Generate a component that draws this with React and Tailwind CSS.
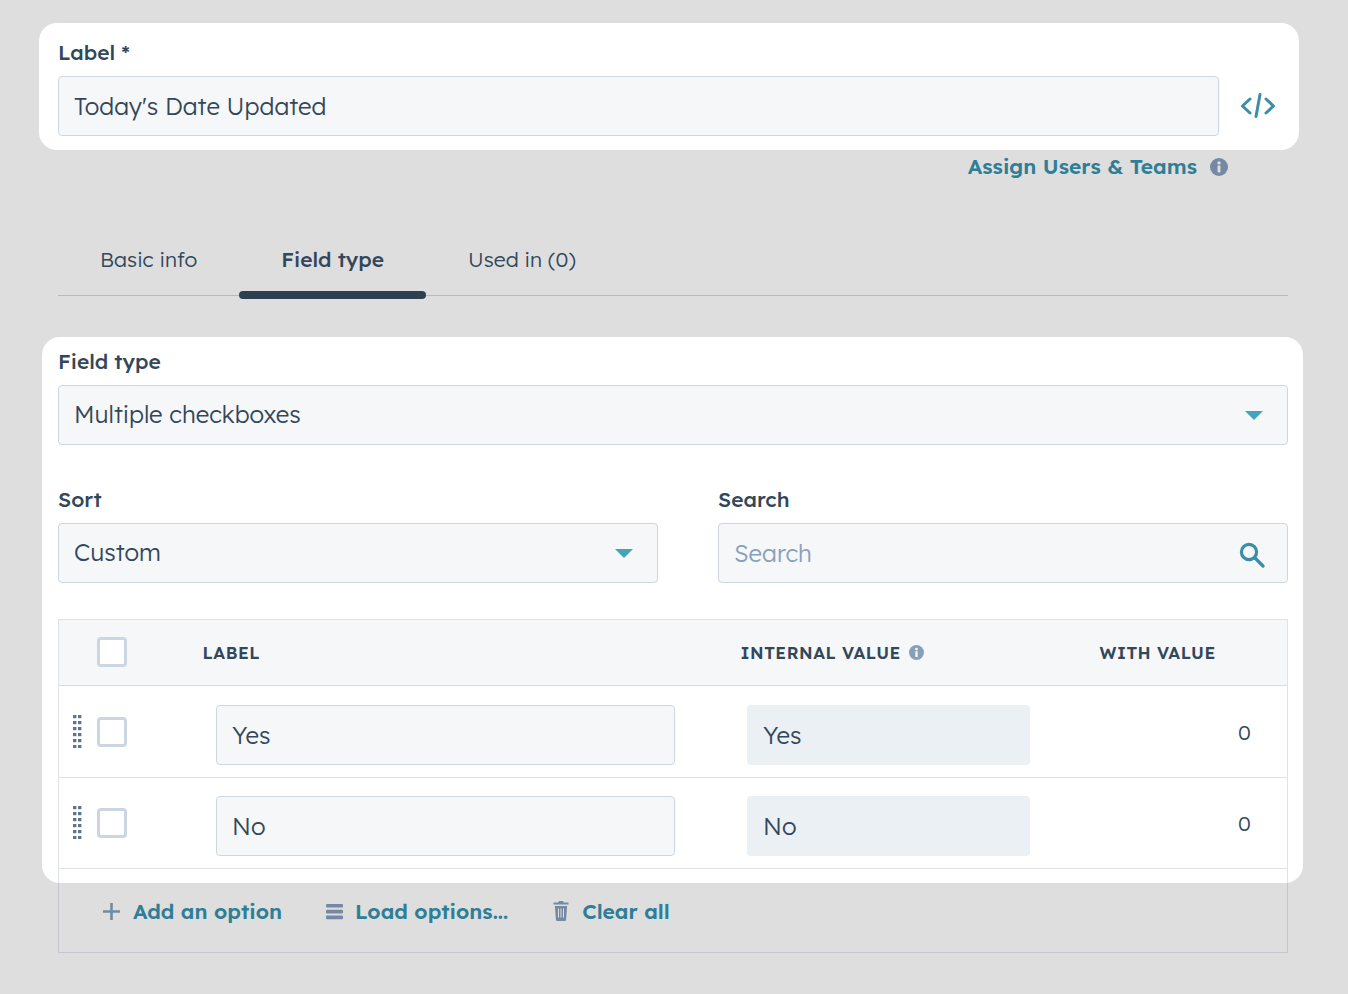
import React from "react";

const font = { fontFamily: '"Lexend Deca", Inter, "Liberation Sans", sans-serif' };

function Caret() {
  return (
    <svg width="18" height="9" viewBox="0 0 18 9" className="shrink-0">
      <path d="M0 0h18L9 9z" fill="#43a5bd" />
    </svg>
  );
}

function InfoDot({ size = 18, color = "#7489a3", hole = "#dedede" }) {
  return (
    <svg width={size} height={size} viewBox="0 0 18 18" className="shrink-0">
      <circle cx="9" cy="9" r="9" fill={color} />
      <circle cx="9" cy="4.9" r="1.7" fill={hole} />
      <rect x="7.6" y="7.6" width="2.8" height="6.8" rx="0.6" fill={hole} />
    </svg>
  );
}

function FieldLabel({ children }) {
  return <div className="mb-[11px] h-6 text-[21px] leading-[22px] font-medium text-[#33475b]">{children}</div>;
}

function Box({ className = "", readOnly = false, children }) {
  return (
    <div
      className={[
        "flex h-[60px] items-center rounded-[4px] border px-[15px] text-[24px] font-light text-[#33475b]",
        readOnly ? "border-transparent bg-[#eaf0f4]" : "border-[#cbd6e2] bg-[#f6f7f9]",
        className,
      ].join(" ")}
    >
      {children}
    </div>
  );
}

function Checkbox({ className = "" }) {
  return <div className={["h-[30px] w-[30px] shrink-0 rounded-[4px] border-[3px] border-[#cbd6e2] bg-white", className].join(" ")} />;
}

function DragHandle() {
  const rows = [0, 1, 2, 3, 4, 5];
  return (
    <svg width="9" height="33" viewBox="0 0 9 33" className="mt-[10px] ml-[14px] shrink-0">
      {rows.map((r) => (
        <g key={r} fill="#5e7590">
          <rect x="0" y={r * 6} width="3.4" height="3.2" />
          <rect x="5" y={r * 6} width="3.4" height="3.2" />
        </g>
      ))}
    </svg>
  );
}

function OptionRow({ label, value, className }) {
  return (
    <div className={["flex items-start border-b border-[#323c6e26] bg-white", className].join(" ")}>
      <DragHandle />
      <Checkbox className="mt-[12px] ml-[15px]" />
      <Box className="ml-[89px] w-[459px]">{label}</Box>
      <Box readOnly className="ml-[72px] w-[283px]">{value}</Box>
      <div className="mt-[15px] ml-[208px] text-[21px] leading-6 font-light text-[#33475b]">0</div>
    </div>
  );
}

export default function App() {
  return (
    <div style={font} className="min-h-[994px] overflow-hidden bg-[#dedede] pt-[23px] pl-[39px]">
      <section className="flex h-[127px] w-[1260px] rounded-[18px] bg-white pt-[18px] pl-[19px]">
        <div className="w-[1161px]">
          <FieldLabel>Label *</FieldLabel>
          <Box>Today's Date Updated</Box>
        </div>
        <svg width="36" height="26" viewBox="0 0 36 26" className="mt-[51px] ml-[21px]" fill="none" stroke="#3a8ea9" strokeWidth="3" strokeLinecap="round" strokeLinejoin="round">
          <path d="M10 7 2.5 14 10 21M26 7l7.5 7L26 21M20 2.5 16 24.5" />
        </svg>
      </section>

      <div className="mt-[5px] flex h-6 w-[1189px] items-center justify-end gap-[13px]">
        <span className="mb-[2px] text-[21px] leading-6 font-semibold text-[#2e7e97]">Assign Users &amp; Teams</span>
        <InfoDot />
      </div>

      <nav className="mt-[45px] ml-[19px] flex h-[72px] w-[1230px] items-end border-b border-[#afbccb]">
        <div className="px-[42px] pb-[24px] text-[21px] leading-6 font-light text-[#33475b]">Basic info</div>
        <div className="relative px-[42px] pb-[24px] text-[21px] leading-6 font-medium text-[#33475b]">
          Field type
          <div className="absolute right-0 -bottom-[4px] left-0 h-2 rounded-full bg-[#2f3f52]" />
        </div>
        <div className="px-[42px] pb-[24px] text-[21px] leading-6 font-light text-[#33475b]">Used in (0)</div>
      </nav>

      <section className="mt-[41px] ml-[3px] h-[546px] w-[1261px] rounded-[18px] bg-white pt-[13px] pl-4">
        <FieldLabel>Field type</FieldLabel>
        <Box className="w-[1230px] justify-between pr-[24px]">
          <span className="mb-[2px]">Multiple checkboxes</span>
          <Caret />
        </Box>

        <div className="mt-[43px] flex w-[1230px] gap-[60px]">
          <div className="w-[600px]">
            <FieldLabel>Sort</FieldLabel>
            <Box className="justify-between pr-[24px]">
              <span className="mb-[2px]">Custom</span>
              <Caret />
            </Box>
          </div>
          <div className="w-[570px]">
            <FieldLabel>Search</FieldLabel>
            <Box className="justify-between pr-[22px]">
              <span className="text-[#88a1bb]">Search</span>
              <svg width="26" height="26" viewBox="0 0 26 26" className="mt-[3px]" fill="none" stroke="#3a8ea9" strokeWidth="3.2" strokeLinecap="round">
                <circle cx="10" cy="10" r="7.6" />
                <path d="m16 16 8 8" />
              </svg>
            </Box>
          </div>
        </div>

        <div className="mt-[36px] w-[1230px] border border-[#323c6e26]">
          <div className="flex h-[66px] items-center border-b border-[#323c6e26] bg-[#f6f7f9] text-[17px] font-semibold tracking-[0.5px] text-[#33475b]">
            <Checkbox className="mb-[2px] ml-[38px]" />
            <div className="ml-[75.5px] w-[538px]">LABEL</div>
            <div className="flex w-[359px] items-center gap-[8px]">
              INTERNAL VALUE
              <InfoDot size={15} color="#86a0ba" hole="#f6f7f9" />
            </div>
            <div>WITH VALUE</div>
          </div>

          <OptionRow label="Yes" value="Yes" className="h-[92px] pt-[19px]" />
          <OptionRow label="No" value="No" className="h-[91px] pt-[18px]" />

          <div className="flex h-[83px] items-start pt-[30px] pl-[44px] text-[21px] leading-6 font-semibold text-[#2e7e97]">
            <div className="flex items-center gap-[13px]">
              <svg width="17" height="17" viewBox="0 0 17 17" fill="none" stroke="#7489a3" strokeWidth="2.6">
                <path d="M8.5 0v17M0 8.5h17" />
              </svg>
              Add an option
            </div>
            <div className="ml-[44px] flex items-center gap-[12px]">
              <svg width="17" height="17" viewBox="0 0 17 17" fill="#7489a3">
                <rect y="1" width="17" height="3.6" rx="1" />
                <rect y="6.8" width="17" height="3.6" rx="1" />
                <rect y="12.6" width="17" height="3.6" rx="1" />
              </svg>
              Load options...
            </div>
            <div className="ml-[45px] flex items-center gap-[13px]">
              <svg width="16" height="20" viewBox="0 0 15 20" fill="#7489a3">
                <path d="M5.5 0h4l.7 1.6H15v2H0v-2h4.8zM1.4 5h12.2l-1 13.4c-.1.9-.8 1.6-1.7 1.6H4.1c-.9 0-1.6-.7-1.7-1.6z" />
                <path d="M5 7.5v9M7.5 7.5v9M10 7.5v9" stroke="#dedede" strokeWidth="1" />
              </svg>
              Clear all
            </div>
          </div>
        </div>
      </section>
    </div>
  );
}
